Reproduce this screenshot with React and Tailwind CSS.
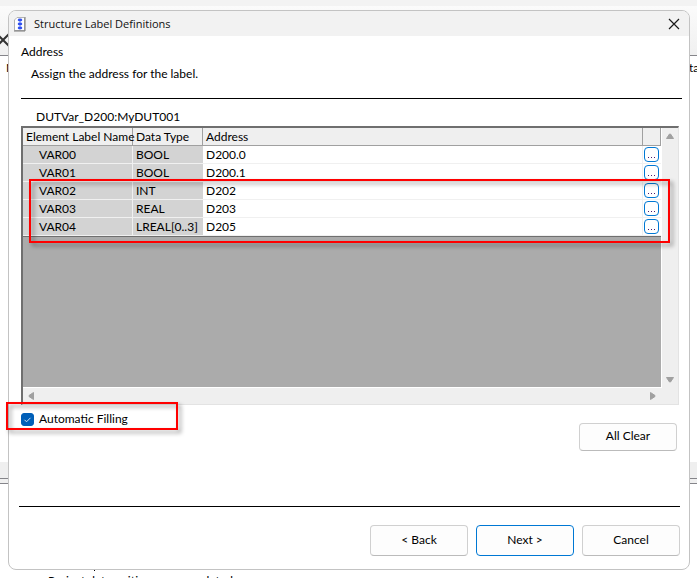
import { useState } from "react";

const labels = [
  { name: "VAR00", type: "BOOL", address: "D200.0" },
  { name: "VAR01", type: "BOOL", address: "D200.1" },
  { name: "VAR02", type: "INT", address: "D202" },
  { name: "VAR03", type: "REAL", address: "D203" },
  { name: "VAR04", type: "LREAL[0..3]", address: "D205" },
];

// Window that sits behind the dialog
function ParentWindow() {
  return (
    <div className="h-screen flex flex-col overflow-hidden bg-white">
      <div className="h-[6px] shrink-0 bg-[#f3f3f3]" />
      <div className="h-[50px] shrink-0 flex items-end pb-2 bg-gradient-to-b from-[#fbfbfb] to-[#f0f0f0] border-b border-[#85858a]">
        <svg width="14" height="14" viewBox="0 0 14 14" className="-ml-1">
          <path d="M1 1 L13 13 M13 1 L1 13" stroke="#333" strokeWidth="2" />
        </svg>
      </div>
      <div className="h-[406px] shrink-0 flex justify-between pt-1 pl-[6px]">
        <span>N</span>
        <span className="w-2 whitespace-nowrap">ta</span>
      </div>
      <div className="h-4 shrink-0 bg-[#efefef]" />
      <div className="h-[6px] shrink-0 border-y border-[#85858a] bg-[#f0f0f0]" />
      <div className="ml-[94px] mt-[82px] h-[5px] w-px shrink-0 bg-black" />
      <div className="pl-12 pt-[2px] whitespace-nowrap">
        Project data writing was completed.
      </div>
    </div>
  );
}

function TitleBar() {
  return (
    <div className="h-[25px] shrink-0 flex items-center bg-[#f2f2f2] pl-1 pr-[9px]">
      <svg width="14" height="16" viewBox="0 0 14 16">
        <path d="M1.5 4 L4 1.5 H11.5 V14.5 H1.5 Z" fill="#fff" stroke="#b4b4b4" />
        <path d="M12 1 V15 H1" fill="none" stroke="#777" />
        <path d="M7 3 V13" stroke="#8fa4f5" />
        <ellipse cx="7" cy="4" rx="2.3" ry="1.4" fill="#2f4ff0" />
        <ellipse cx="7" cy="8" rx="2.3" ry="1.4" fill="#2f4ff0" />
        <ellipse cx="7" cy="12" rx="2.3" ry="1.4" fill="#2f4ff0" />
      </svg>
      <h1 className="ml-[7px] grow font-['Open_Sans',sans-serif] text-[11px] text-[#111]">
        Structure Label Definitions
      </h1>
      <button aria-label="Close">
        <svg width="12" height="12" viewBox="0 0 12 12">
          <path d="M1 1 L11 11 M11 1 L1 11" stroke="#1a1a1a" strokeWidth="1.2" />
        </svg>
      </button>
    </div>
  );
}

function LabelTable() {
  return (
    <table className="w-full table-fixed border-separate border-spacing-0 text-left">
      <colgroup>
        <col className="w-[110px]" />
        <col className="w-[70px]" />
        <col />
        <col className="w-[18px]" />
      </colgroup>
      <thead>
        <tr className="h-[18px] bg-[#efefef]">
          <th className="border-r border-b border-[#a0a0a0] p-0 pl-[3px] font-normal whitespace-nowrap">
            Element Label Name
          </th>
          <th className="border-r border-b border-[#a0a0a0] p-0 pl-[3px] font-normal">
            Data Type
          </th>
          <th className="border-r border-b border-[#a0a0a0] p-0 pl-[3px] font-normal">
            Address
          </th>
          <th className="border-r border-b border-[#a0a0a0] p-0" />
        </tr>
      </thead>
      <tbody>
        {labels.map((label) => (
          <tr key={label.name} className="h-[18px]">
            <td className="border-r border-b border-[#f0f0f0] bg-[#d3d3d3] p-0 pl-4">
              {label.name}
            </td>
            <td className="border-b border-[#f0f0f0] bg-[#d3d3d3] p-0 pl-[3px]">
              {label.type}
            </td>
            <td className="border-r border-b border-[#f0f0f0] bg-white p-0 pl-[3px]">
              {label.address}
            </td>
            <td className="border-b border-[#f0f0f0] bg-white p-0 pl-px">
              <button
                aria-label={`Browse ${label.name}`}
                className="flex h-[15px] w-[15px] items-end justify-center rounded-[4px] border border-[#0078d4] bg-white pb-[3px]"
              >
                <svg width="7" height="1" viewBox="0 0 7 1">
                  <path d="M0 0 H1 V1 H0 Z M3 0 H4 V1 H3 Z M6 0 H7 V1 H6 Z" fill="#4b1a70" />
                </svg>
              </button>
            </td>
          </tr>
        ))}
      </tbody>
    </table>
  );
}

function Arrow({ points }) {
  return (
    <svg width="8" height="8" viewBox="0 0 8 8" className="shrink-0">
      <polygon points={points} fill="#a0a0a0" stroke="#a0a0a0" strokeLinejoin="round" />
    </svg>
  );
}

function LabelGrid() {
  return (
    <div className="relative flex flex-col h-[279px] border-t-2 border-l-2 border-r border-b border-t-[#6f6f6f] border-l-[#6f6f6f] border-r-[#e3e3e3] border-b-[#e3e3e3] bg-[#efefef]">
      <div className="grow flex">
        <div className="grow border-r border-b border-white bg-[#ababab]">
          <LabelTable />
          <div className="h-px bg-[#6f6f6f]" />
        </div>
        <div className="w-4 shrink-0 flex flex-col items-center justify-between py-1">
          <Arrow points="3.5,2 4.5,2 7.5,6.5 0.5,6.5" />
          <Arrow points="3.5,6 4.5,6 7.5,1.5 0.5,1.5" />
        </div>
      </div>
      <div className="h-4 flex items-center justify-between pl-1 pr-[21px]">
        <Arrow points="2,3.5 2,4.5 6.5,7.5 6.5,0.5" />
        <Arrow points="6,3.5 6,4.5 1.5,7.5 1.5,0.5" />
      </div>

      {/* Highlight around the auto-filled rows */}
      <div className="pointer-events-none absolute top-[51px] left-[6px] right-[8px] h-[64px] border-2 border-[#ff0000] drop-shadow-[3px_3px_2px_rgba(0,0,0,0.4)]" />
    </div>
  );
}

function DialogButton({ children, primary }) {
  return (
    <button
      className={`h-full w-[98px] rounded-[4px] border bg-[#fdfdfd] pb-[2px] ${
        primary ? "border-[#0078d4]" : "border-[#d0d0d0] border-b-[#bbbbbb]"
      }`}
    >
      {children}
    </button>
  );
}

export default function App() {
  const [autoFill, setAutoFill] = useState(true);

  return (
    <div className="relative font-[Lato,sans-serif] text-[12px] leading-4 text-black">
      <ParentWindow />

      <div
        role="dialog"
        aria-label="Structure Label Definitions"
        className="absolute top-[10px] bottom-2 left-2 right-[7px] flex flex-col overflow-hidden rounded-lg border border-[#c3c3c3] bg-white"
      >
        <TitleBar />

        <div className="pl-3 pr-[7px] pt-2">
          <h2>Address</h2>
          <p className="mt-[6px] pl-[10px]">Assign the address for the label.</p>
          <hr className="mt-4 border-black" />
        </div>

        <div className="pl-3 pr-[10px] pt-[10px]">
          <p className="mb-px pl-[15px]">DUTVar_D200:MyDUT001</p>
          <LabelGrid />
        </div>

        <div className="flex">
          <label className="flex h-7 items-center pl-3">
            <input
              type="checkbox"
              checked={autoFill}
              onChange={(e) => setAutoFill(e.target.checked)}
              className="peer h-[13px] w-[13px] appearance-none rounded-[3px] border border-[#8a8a8a] checked:border-[#005fb8] checked:bg-[#005fb8]"
            />
            <svg
              width="13"
              height="13"
              viewBox="0 0 13 13"
              className="pointer-events-none relative invisible -ml-[13px] peer-checked:visible"
            >
              <path d="M3.5 6.8 L5.5 8.8 L9.5 4.8" fill="none" stroke="#cfe3f7" />
            </svg>
            <span className="ml-[5px]">Automatic Filling</span>
          </label>
        </div>

        <div className="flex h-7 shrink-0 justify-end pr-3 -mt-[10px]">
          <DialogButton>All Clear</DialogButton>
        </div>

        <div className="mt-auto pl-[10px] pr-[9px] pb-[13px]">
          <hr className="border-black" />
          <div className="mt-[18px] flex h-[31px] justify-end gap-2">
            <DialogButton>&lt; Back</DialogButton>
            <DialogButton primary>Next &gt;</DialogButton>
            <DialogButton>Cancel</DialogButton>
          </div>
        </div>
      </div>

      {/* Highlight around the checkbox, overlaps the dialog edge */}
      <div className="pointer-events-none absolute top-[402px] left-[6px] h-[28px] w-[172px] border-2 border-[#ff0000] drop-shadow-[3px_3px_2px_rgba(0,0,0,0.4)]" />
    </div>
  );
}
